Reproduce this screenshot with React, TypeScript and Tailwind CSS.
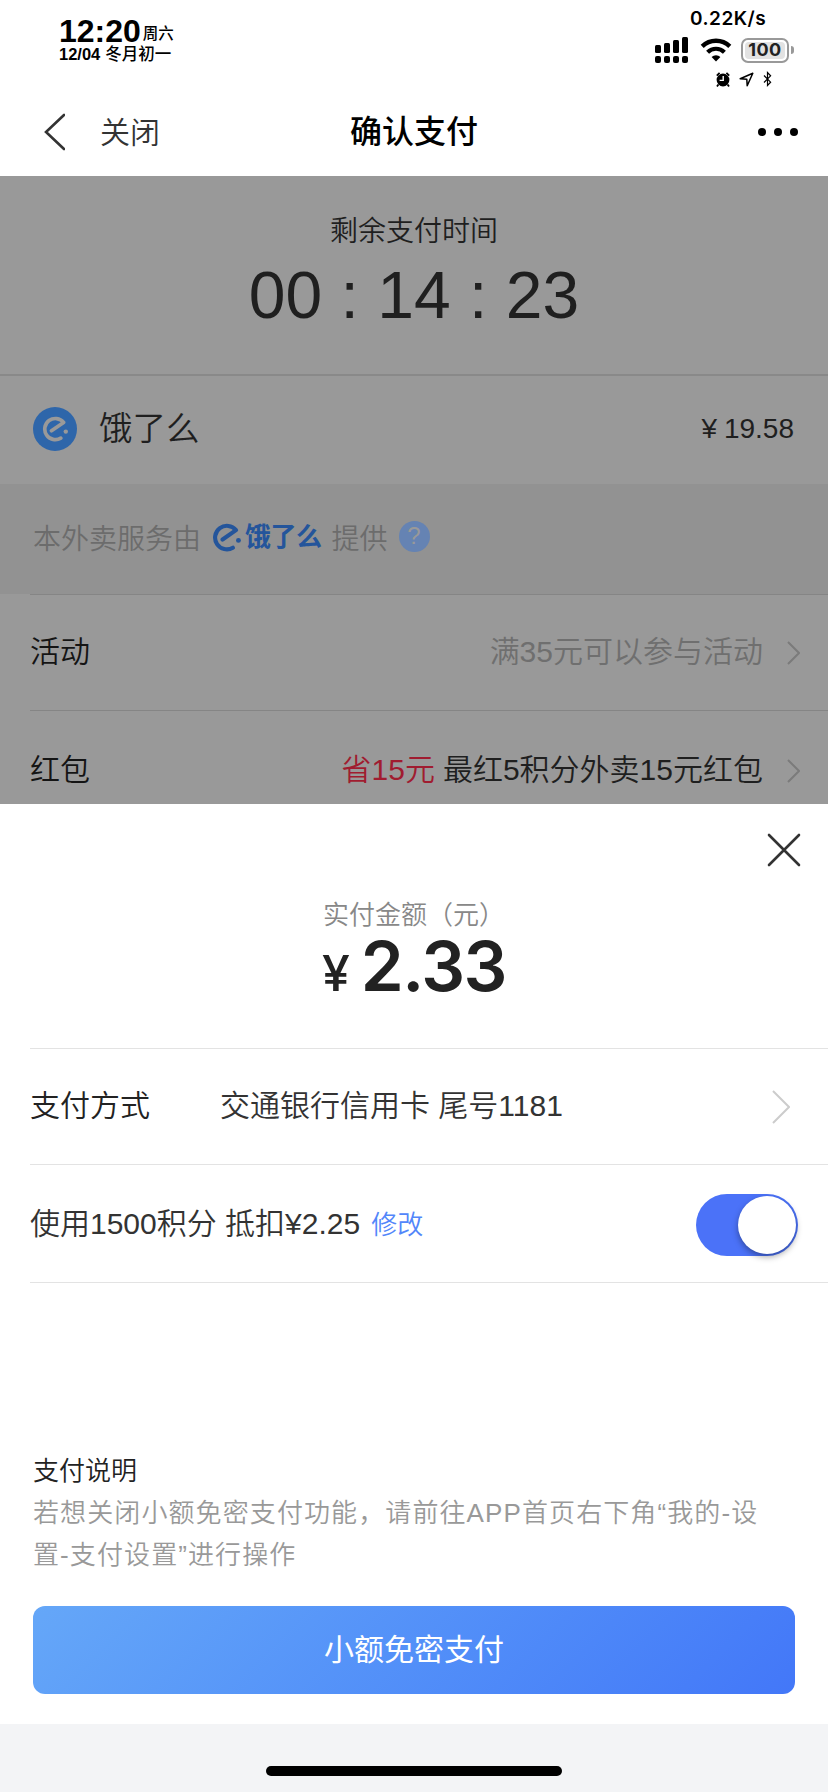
import { useState } from "react";

type RowProps = {
    label: string;
    height: string;
    children: React.ReactNode;
};

function Chevron({ size, stroke }: { size: number; stroke: string }) {
    return (
        <svg width={size / 2 + 2} height={size + 2} viewBox={`0 0 ${size / 2 + 2} ${size + 2}`} fill="none">
            <path d={`M1 1L${size / 2 + 1} ${size / 2 + 1}L1 ${size + 1}`} stroke={stroke} strokeWidth="2" />
        </svg>
    );
}

function EleMark({ color, className }: { color: string; className: string }) {
    return (
        <svg viewBox="9 9 27 26" fill="none" className={className}>
            <path
                d="M18.5 23.8L30.6 15.4A10.6 10.6 0 1 0 27.8 31.2"
                stroke={color}
                strokeWidth="3.7"
                strokeLinecap="round"
                strokeLinejoin="round"
            />
            <circle cx="32.8" cy="24.6" r="2.2" fill={color} />
        </svg>
    );
}

function StatusBar() {
    return (
        <div className="h-[88px] flex justify-between text-black">
            <div className="pl-[59px] pt-[17px]">
                <div className="flex items-end h-7">
                    <span className="text-[32px] leading-7 font-bold">12:20</span>
                    <span className="text-[15.5px] leading-4 font-medium ml-0.5 mb-[3px]">周六</span>
                </div>
                <div className="flex items-center h-[18px] leading-[18px] text-[16.5px] font-bold">
                    <span>12/04</span>
                    <span className="ml-[5px] font-medium text-[16.5px]">冬月初一</span>
                </div>
            </div>

            <div className="w-[173px] pt-[7px] font-['Inter',sans-serif]">
                <div className="ml-[35px] h-[23px] leading-[23px] text-[19px] font-semibold tracking-[0.5px]">
                    0.22K/s
                </div>
                <div className="flex items-center mt-[7px] h-[26px]">
                    <svg width="34" height="26" viewBox="0 0 34 26">
                        <rect x="0" y="8" width="6" height="8" rx="1.5" />
                        <rect x="9" y="6" width="6" height="10" rx="1.5" />
                        <rect x="18" y="3" width="6" height="13" rx="1.5" />
                        <rect x="27" y="0" width="6" height="16" rx="1.5" />
                        <rect x="0" y="19" width="6" height="7" rx="2" />
                        <rect x="9" y="19" width="6" height="7" rx="2" />
                        <rect x="18" y="19" width="6" height="7" rx="2" />
                        <rect x="27" y="19" width="6" height="7" rx="2" />
                    </svg>
                    <svg width="32" height="24" viewBox="0 0 32 24" fill="none" className="ml-[11px]">
                        <path d="M2.2 8.3A20 20 0 0 1 29.8 8.3" stroke="#000" strokeWidth="4.4" />
                        <path d="M7.6 14.2A12 12 0 0 1 24.4 14.2" stroke="#000" strokeWidth="4.2" />
                        <path d="M16 23.5L11.6 19A6.2 6.2 0 0 1 20.4 19Z" fill="#000" />
                    </svg>
                    <div className="ml-[9px] w-12 h-[25px] rounded-[7px] border-2 border-[#999] p-[2px]">
                        <div className="h-full rounded-[4px] bg-[#e2e2e2] flex items-center justify-center text-[18px] leading-none font-bold text-[#222] tracking-[0.5px]">
                            100
                        </div>
                    </div>
                    <div className="ml-0.5 w-[3px] h-2 rounded-r-full bg-[#999]" />
                </div>
                <div className="flex items-center mt-2 ml-[61px] h-4">
                    <svg width="14" height="15" viewBox="0 0 14 15">
                        <circle cx="7" cy="8" r="6.4" />
                        <path d="M0.8 3.6L3.6 0.9M13.2 3.6L10.4 0.9M2.4 12.4L1 14.4M11.6 12.4L13 14.4" stroke="#000" strokeWidth="1.8" />
                        <path d="M7.2 4V8.4H3.6" stroke="#fff" strokeWidth="1.4" fill="none" />
                    </svg>
                    <svg width="15" height="15" viewBox="0 0 15 15" fill="none" className="ml-[9px]">
                        <path d="M1.2 6.8L13.8 1.2L8.2 13.8L7.8 7.2Z" stroke="#000" strokeWidth="1.5" strokeLinejoin="round" />
                    </svg>
                    <svg width="9" height="16" viewBox="0 0 9 16" fill="none" className="ml-[9px]">
                        <path d="M1 4.5L7.6 11.2L4.5 14.5V1.5L7.6 4.8L1 11.5" stroke="#000" strokeWidth="1.2" />
                    </svg>
                </div>
            </div>
        </div>
    );
}

function NavBar() {
    return (
        <div className="h-22 flex items-center justify-between pl-[43px] pr-[30px]">
            <div className="flex items-center w-[131px]">
                <svg width="22" height="38" viewBox="0 0 22 38" fill="none">
                    <path d="M21 2L3 19L21 36" stroke="#333" strokeWidth="2.6" strokeLinecap="round" />
                </svg>
                <span className="ml-[35px] text-[30px] text-[#333] whitespace-nowrap">关闭</span>
            </div>
            <h1 className="text-[32px] font-medium text-black">确认支付</h1>
            <div className="flex justify-end gap-2 w-[144px]">
                <span className="size-2 rounded-full bg-black" />
                <span className="size-2 rounded-full bg-black" />
                <span className="size-2 rounded-full bg-black" />
            </div>
        </div>
    );
}

function OrderRow({ label, height, children }: RowProps) {
    return (
        <div className={`${height} ml-[30px] pr-[28px] border-t border-[#858585] flex items-center justify-between text-[30px]`}>
            <span className="pb-0.5 text-[#141414]">{label}</span>
            <div className="flex items-center">
                <div className="pb-0.5">{children}</div>
                <span className="ml-6">
                    <Chevron size={22} stroke="#7b7b7b" />
                </span>
            </div>
        </div>
    );
}

function App() {
    const [usePoints, setUsePoints] = useState(true);

    return (
        <div className="w-[828px] h-[1792px] overflow-hidden bg-white flex flex-col font-[350] font-['Liberation_Sans','Noto_Sans_CJK_SC',sans-serif]">
            <StatusBar />
            <NavBar />

            {/* Order behind the sheet */}
            <div className="h-[628px] overflow-hidden bg-[#999] text-[#1f1f1f]">
                <div className="h-[198px] pt-[35px] text-center">
                    <p className="text-[28px] leading-[42px]">剩余支付时间</p>
                    <p className="text-[66px] leading-[76px] mt-1">00 : 14 : 23</p>
                </div>
                <div className="h-[110px] border-t-2 border-[#898989] flex items-center pl-[33px] pr-[34px] pb-0.5">
                    <div className="size-11 rounded-full bg-[#2e66aa] flex items-center justify-center">
                        <EleMark color="#999" className="w-[27px] h-[26px]" />
                    </div>
                    <span className="ml-[22px] text-[33.5px]">饿了么</span>
                    <span className="ml-auto text-[28px] [word-spacing:-1px]">¥ 19.58</span>
                </div>
                <div className="h-[110px] bg-[#929292] flex items-center pl-[33px] text-[28px] text-[#6c6c6c]">
                    <span className="pt-0.5">本外卖服务由</span>
                    <EleMark color="#24559b" className="ml-[11px] mb-1 w-[30px] h-[29px]" />
                    <span className="ml-[3px] mb-[3px] text-[26px] font-bold tracking-[-0.5px] text-[#24559b]">饿了么</span>
                    <span className="ml-2.5 pt-0.5">提供</span>
                    <span className="ml-[11px] mb-1.5 size-[31px] rounded-full bg-[#6583b3] flex items-center justify-center text-[24px] leading-none text-[#999]">
                        ?
                    </span>
                </div>
                <OrderRow label="活动" height="h-[116px]">
                    <span className="text-[#6f6f6f]">满35元可以参与活动</span>
                </OrderRow>
                <OrderRow label="红包" height="h-[120px]">
                    <span className="text-[#a01c30]">省15元</span>
                    <span className="ml-2">最红5积分外卖15元红包</span>
                </OrderRow>
            </div>

            {/* Payment sheet */}
            <div className="h-[920px] bg-white">
                <div className="h-[90px] pt-[29px] pr-[27px] flex justify-end">
                    <svg width="34" height="34" viewBox="0 0 34 34" fill="none">
                        <path d="M2 2L32 32M32 2L2 32" stroke="#333" strokeWidth="2.6" strokeLinecap="round" />
                    </svg>
                </div>
                <div className="h-[154px] pt-px text-center">
                    <p className="text-[26px] leading-10 text-[#888]">实付金额（元）</p>
                    <p className="flex items-baseline justify-center font-['Inter',sans-serif] font-semibold text-[#222] leading-[63px]">
                        <span className="text-[50px] font-medium">¥</span>
                        <span className="ml-[11px] text-[69px] tracking-[-1.5px]">2.33</span>
                    </p>
                </div>

                <div className="ml-[30px] border-t border-[#e3e3e3] h-[116px] pr-[38px] flex items-center text-[30px]">
                    <span className="w-[190px] pb-0.5 text-[#222]">支付方式</span>
                    <span className="pb-0.5 text-[#333]">交通银行信用卡 尾号1181</span>
                    <span className="ml-auto">
                        <Chevron size={32} stroke="#ccc" />
                    </span>
                </div>
                <div className="ml-[30px] border-y border-[#e3e3e3] h-[119px] pr-[30px] flex items-center text-[30px] text-[#333]">
                    <span>使用1500积分 抵扣¥2.25</span>
                    <span className="ml-[11px] pt-[3px] text-[26px] text-[#5286fa]">修改</span>
                    <button
                        onClick={() => setUsePoints(!usePoints)}
                        className={`ml-auto w-[102px] h-[62px] mt-0.5 p-0.5 rounded-full flex items-center ${usePoints ? "bg-[#4b72f8] justify-end" : "bg-gray-300 justify-start"}`}
                    >
                        <span className="size-[58px] rounded-full bg-white shadow-[0_3px_6px_rgba(0,0,0,0.35)]" />
                    </button>
                </div>

                <div className="mt-[167px] px-[33px] text-[26px] leading-[42px]">
                    <p className="text-[#222]">支付说明</p>
                    <p className="text-[#999] tracking-[1.1px]">
                        若想关闭小额免密支付功能，请前往APP首页右下角“我的-设
                        <br />
                        置-支付设置”进行操作
                    </p>
                    <button className="mt-[30px] w-full h-[88px] rounded-xl bg-linear-135 from-[#65a7f8] to-[#4377f8] text-[30px] font-normal text-white">
                        小额免密支付
                    </button>
                </div>
            </div>

            {/* Home indicator */}
            <div className="h-[68px] bg-[#f3f4f6] flex justify-center pt-[42px]">
                <div className="w-[296px] h-2.5 rounded-full bg-black" />
            </div>
        </div>
    );
}

export default App;
